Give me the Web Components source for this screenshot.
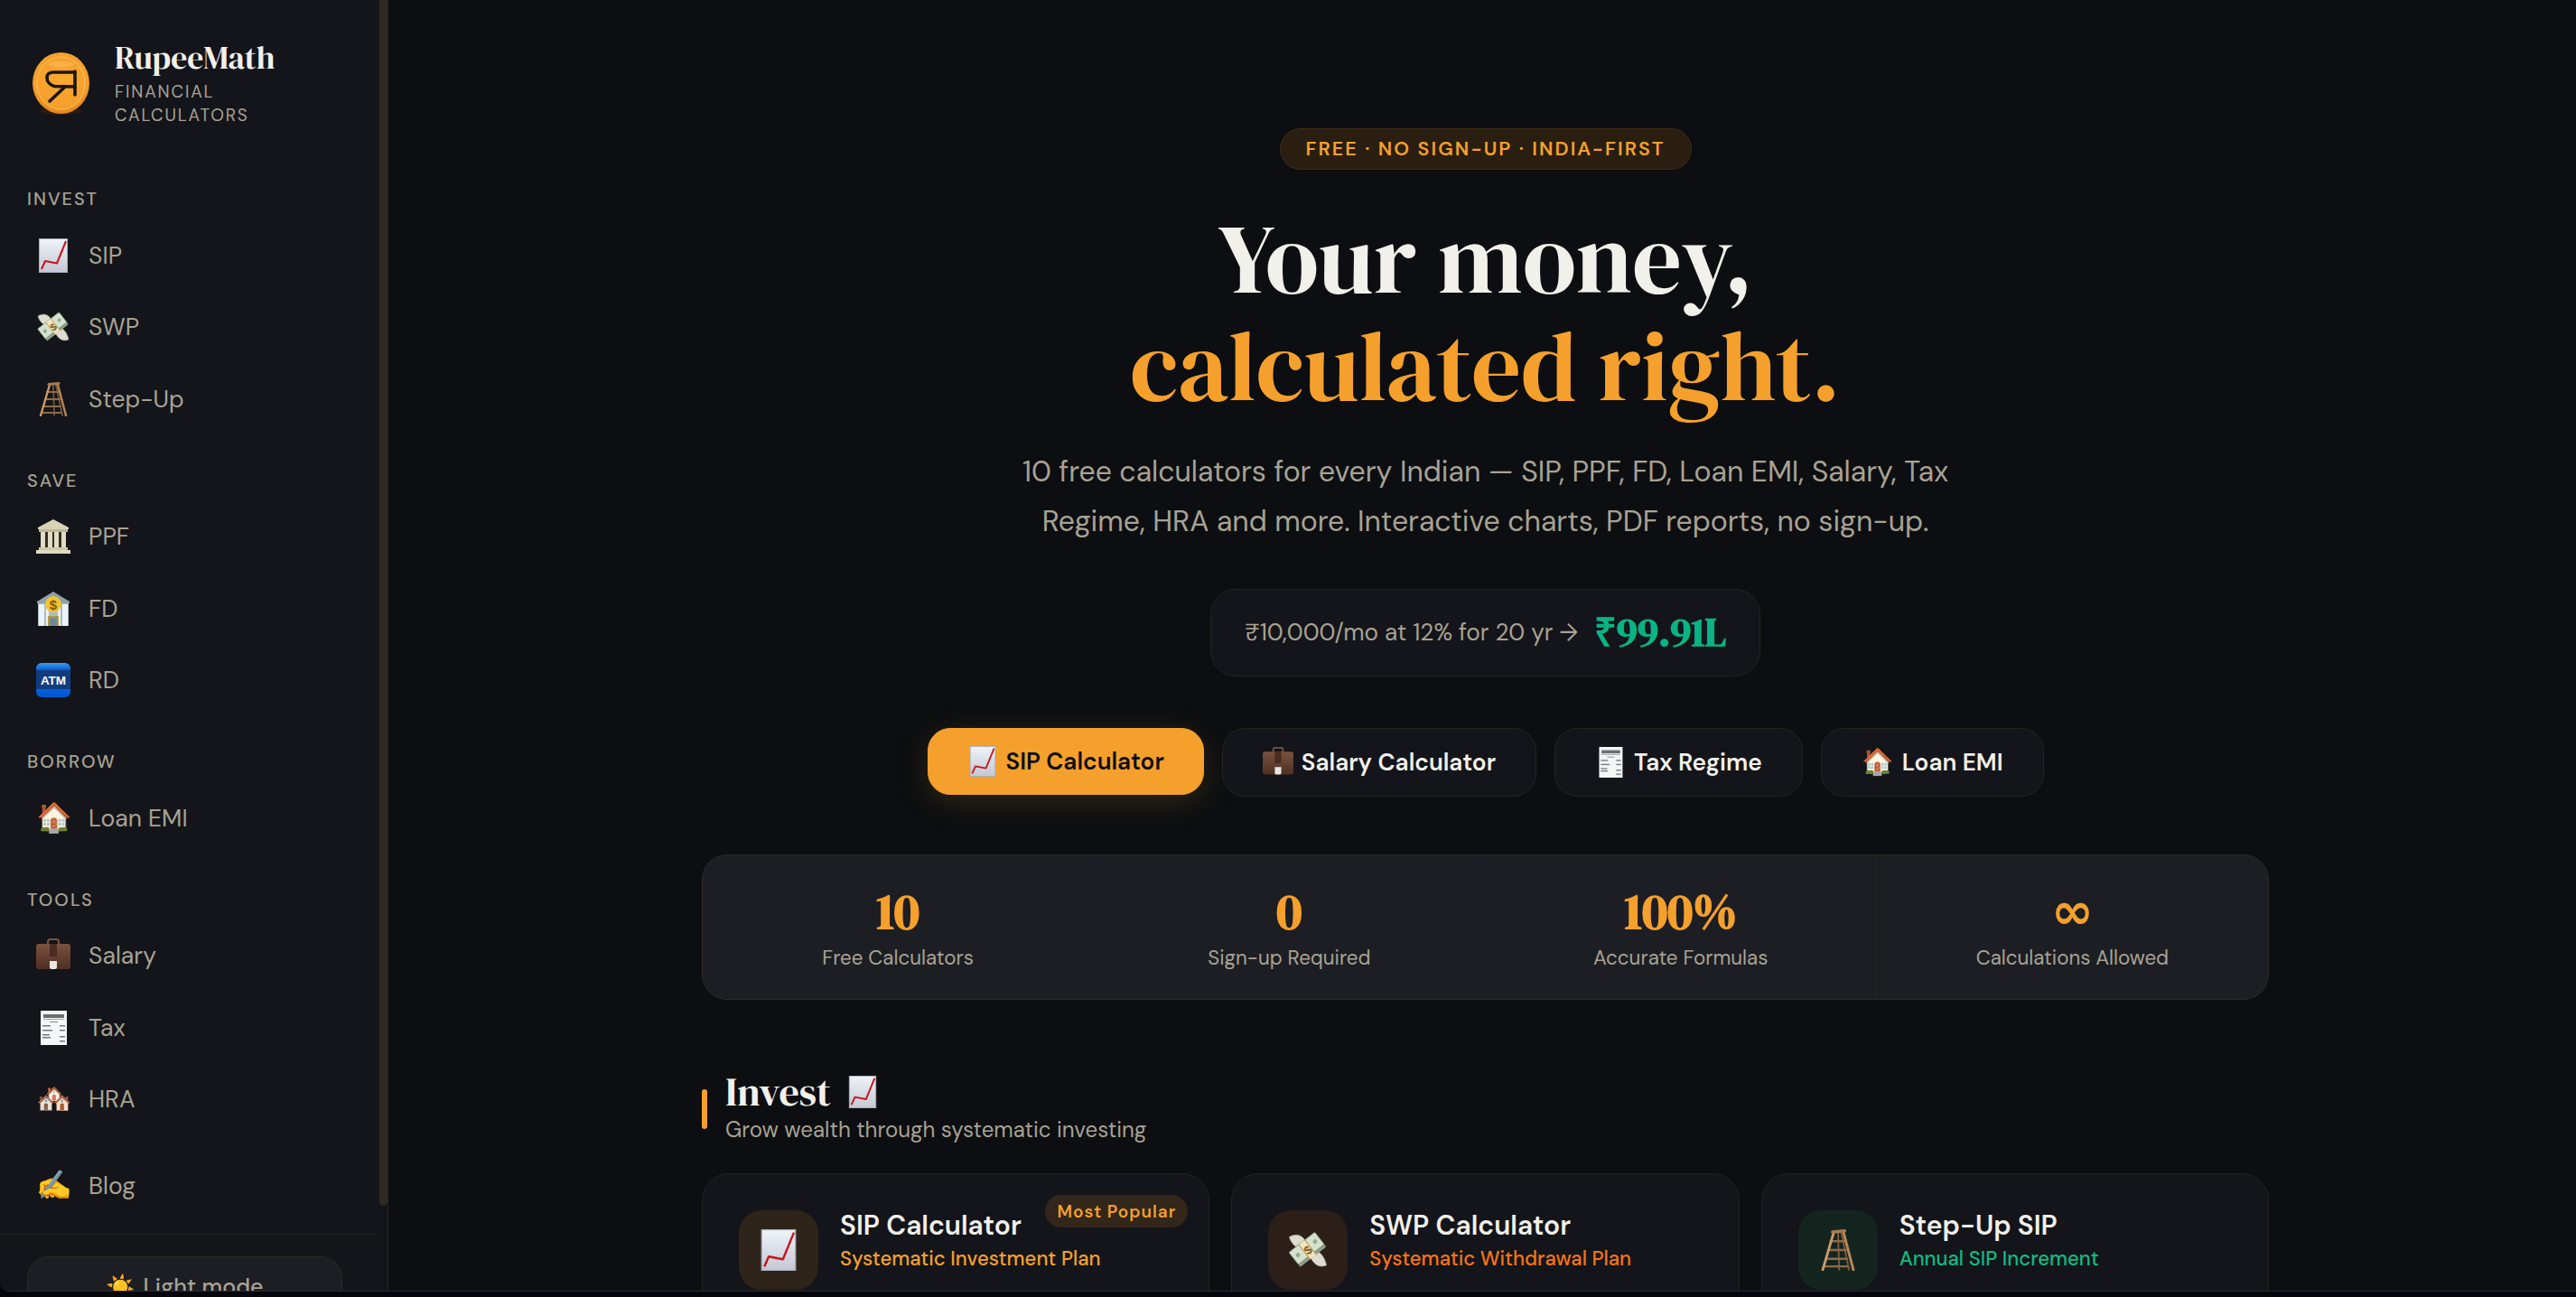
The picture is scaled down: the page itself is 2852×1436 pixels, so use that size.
<!doctype html>
<html lang="en"><head><meta charset="utf-8"><title>RupeeMath</title><style>
html,body{margin:0;height:100%;background:#05050d;overflow:hidden}
body{font-family:"DM Sans","Noto Sans",sans-serif;color:#a8a293}
</style></head><body>
<app-shell>
  <side-bar slot="side">
    <brand-mark slot="brand"></brand-mark>
    <nav-section label="Invest">
      <nav-item icon="chart">SIP</nav-item>
      <nav-item icon="money">SWP</nav-item>
      <nav-item icon="ladder">Step-Up</nav-item>
    </nav-section>
    <nav-section label="Save">
      <nav-item icon="temple">PPF</nav-item>
      <nav-item icon="bank">FD</nav-item>
      <nav-item icon="atm">RD</nav-item>
    </nav-section>
    <nav-section label="Borrow">
      <nav-item icon="🏠">Loan EMI</nav-item>
    </nav-section>
    <nav-section label="Tools">
      <nav-item icon="case">Salary</nav-item>
      <nav-item icon="receipt">Tax</nav-item>
      <nav-item icon="🏘️">HRA</nav-item>
    </nav-section>
    <nav-section class="blog">
      <nav-item icon="✍️">Blog</nav-item>
    </nav-section>
    <theme-toggle slot="foot">Light mode</theme-toggle>
  </side-bar>
  <main-view slot="main">
    <hero-block>
      <cta-button icon="chart" primary>SIP Calculator</cta-button>
      <cta-button icon="case">Salary Calculator</cta-button>
      <cta-button icon="receipt">Tax Regime</cta-button>
      <cta-button icon="🏠">Loan EMI</cta-button>
    </hero-block>
    <stat-strip>
      <stat-cell value="10">Free Calculators</stat-cell>
      <stat-cell value="0">Sign-up Required</stat-cell>
      <stat-cell value="100%">Accurate Formulas</stat-cell>
      <stat-cell value="∞">Calculations Allowed</stat-cell>
    </stat-strip>
    <section-head heading="Invest" icon="chart">Grow wealth through systematic investing</section-head>
    <card-grid>
      <calc-card icon="chart" tint="#2e2419" tone="#f5a02c" sub="Systematic Investment Plan" badge="Most Popular">SIP Calculator</calc-card>
      <calc-card icon="money" tint="#2c1f1a" tone="#f97316" sub="Systematic Withdrawal Plan">SWP Calculator</calc-card>
      <calc-card icon="ladder" tint="#14251f" tone="#10b981" sub="Annual SIP Increment">Step-Up SIP</calc-card>
    </card-grid>
  </main-view>
</app-shell>
<script>
const SANS = '"DM Sans","Noto Sans",sans-serif';
const SERIF = '"DM Serif Display","Liberation Serif",serif';

// drawn to look like the emoji in the screenshot, all on a 38x38 box
const ICONS = {
  chart: `<defs><linearGradient id="c" x1="0" y1="0" x2="0" y2="1"><stop offset="0" stop-color="#eff3f9"/><stop offset="1" stop-color="#c3c8d4"/></linearGradient></defs>
    <rect x="3.5" y=".5" width="31" height="37" fill="url(#c)" stroke="#aab0bd"/>
    <path d="M6 34l4-9 13 2.5L33 3" fill="none" stroke="#c8131b" stroke-width="2" stroke-linejoin="round"/>`,
  money: `<path d="M2 7c5-3 11-3 15 4l-5 7C8 17 3 12 2 7zM36 33c-5 2-10 1-14-6l5-7c4 1 8 7 9 13z" fill="#dedcd0" stroke="#9c9a8c" stroke-width=".6"/>
    <g transform="rotate(-38 19 19)"><rect x="4" y="11" width="30" height="16" rx="1" fill="#8f9f88"/><rect x="4" y="10" width="30" height="14" rx="1" fill="#d5e2cf" stroke="#7e8f78" stroke-width=".7"/><circle cx="9" cy="17" r="2" fill="#93ab8c"/><circle cx="29" cy="17" r="2" fill="#93ab8c"/><rect x="15" y="10" width="8" height="17" fill="#c9a24a"/><rect x="16" y="10" width="6" height="17" fill="#efe6c8"/></g>
    <text x="19" y="23" font-size="11" font-weight="700" text-anchor="middle" fill="#7a5a1a" font-family="Liberation Sans,sans-serif" transform="rotate(-38 19 19)">$</text>`,
  ladder: `<g fill="none" stroke-linecap="round"><path d="M19 3l1 34M22 3l7 34" stroke="#7a5a3e" stroke-width="1.6"/><path d="M12 11h13M10 19h16M8 27h19M6 34h22" stroke="#8d6a48" stroke-width="2"/><path d="M15 3L5 37" stroke="#c89a6a" stroke-width="2.4"/><path d="M24 3l9 34" stroke="#b98858" stroke-width="2.4"/><path d="M14 2.5l11-1" stroke="#a87a50" stroke-width="3"/></g>`,
  temple: `<path d="M19 0L36 9v2H2V9z" fill="#d9d3b6"/><rect x="3" y="11" width="32" height="3" fill="#bdb698"/><rect x="6" y="14" width="26" height="17" fill="#2f2e28"/><g fill="#e2dcc2"><rect x="5" y="14" width="5" height="17"/><rect x="13" y="14" width="5" height="17"/><rect x="20" y="14" width="5" height="17"/><rect x="28" y="14" width="5" height="17"/></g><rect x="3" y="31" width="32" height="3" fill="#cfc8aa"/><rect x="0" y="34" width="38" height="4" fill="#e0dac0"/>`,
  bank: `<path d="M19 0L37 11v2H1v-2z" fill="#8ea2ac"/><rect x="2" y="13" width="34" height="25" fill="#a9bbc4"/><g fill="#eef3f5"><rect x="3" y="14" width="6" height="24"/><rect x="29" y="14" width="6" height="24"/><rect x="11" y="14" width="3" height="24"/><rect x="24" y="14" width="3" height="24"/></g><rect x="13" y="27" width="12" height="11" fill="#b59a3e"/><rect x="15" y="29" width="8" height="9" fill="#6f8a94"/><circle cx="19" cy="14" r="9" fill="#f2c230"/><text x="19" y="19.5" font-size="15" font-weight="700" text-anchor="middle" fill="#7a5a10" font-family="Liberation Sans,sans-serif">$</text>`,
  atm: `<defs><linearGradient id="a" x1="0" y1="0" x2="0" y2="1"><stop offset="0" stop-color="#3b9cf0"/><stop offset=".2" stop-color="#0a5fd0"/><stop offset=".22" stop-color="#123c80"/><stop offset=".75" stop-color="#123c80"/><stop offset=".77" stop-color="#0060dd"/><stop offset="1" stop-color="#0058cc"/></linearGradient></defs><rect width="38" height="38" rx="6" fill="url(#a)"/><text x="19" y="24" font-size="13.5" font-weight="700" text-anchor="middle" fill="#fff" font-family="Liberation Sans,sans-serif">ATM</text>`,
  case: `<defs><linearGradient id="b" x1="0" y1="0" x2="0" y2="1"><stop offset="0" stop-color="#7a5240"/><stop offset="1" stop-color="#4e2f22"/></linearGradient></defs><path d="M13 8V3.5C13 2 14 1 15.5 1h7C24 1 25 2 25 3.5V8" fill="none" stroke="#7c5440" stroke-width="2"/><rect y="6" width="38" height="28" rx="3" fill="url(#b)"/><rect x="15" y="6" width="8" height="14" fill="#4a2c20"/><path d="M15 25h8v7c0 1-1 2-2 2h-4c-1 0-2-1-2-2z" fill="#e8e6e0"/>`,
  receipt: `<rect x="5" y="0" width="29" height="38" fill="#f4f5f6"/><rect x="8" y="4" width="23" height="4" fill="#6c6e72"/><rect x="8" y="9" width="23" height="1" fill="#a8aaae"/><rect x="15" y="12" width="9" height="1" fill="#8a8c90"/><g fill="#77797d"><rect x="7" y="16" width="9" height="1.5"/><rect x="26" y="16" width="6" height="1.5"/><rect x="7" y="21" width="11" height="1.5"/><rect x="26" y="21" width="6" height="1.5"/><rect x="7" y="26" width="8" height="1.5"/><rect x="7" y="29" width="9" height="1.5"/><rect x="26" y="28" width="6" height="1.5"/><rect x="26" y="33" width="6" height="1.5"/></g>`
};

// svg for the drawn ones, the font's colour glyph for the rest
function icon(name, size) {
  if (ICONS[name]) return `<svg width="${size}" height="${size}" viewBox="0 0 38 38" style="display:block;flex:none">${ICONS[name]}</svg>`;
  return `<span style="font-size:${size * 0.84}px;line-height:1;display:block">${name}</span>`;
}

class AppShell extends HTMLElement {
  constructor() {
    super();
    this.attachShadow({mode: 'open'}).innerHTML = `
    <style>
      :host { display: flex; height: 1430px; box-sizing: border-box; border-bottom: 1px solid #2c2c2c; border-bottom-left-radius: 10px; overflow: hidden; background: #0c0e11; }
    </style>
    <slot name="side"></slot><slot name="main"></slot>`;
  }
}

class SideBar extends HTMLElement {
  constructor() {
    super();
    this.attachShadow({mode: 'open'}).innerHTML = `
    <style>
      :host { display: flex; flex: none; width: 430px; height: 1429px; overflow: hidden; background: #13151a; border-right: 1px solid #26231f; box-sizing: border-box; }
      .col { width: 420px; flex: none; display: flex; flex-direction: column; }
      nav { height: 1367px; flex: none; overflow: hidden; box-sizing: border-box; border-bottom: 1px solid #26231f; }
      .thumb { width: 9px; height: 1335px; background: #2e2a22; border-radius: 0 0 5px 5px; }
    </style>
    <div class="col">
      <nav><slot name="brand"></slot><slot></slot></nav>
      <slot name="foot"></slot>
    </div>
    <div class="thumb"></div>`;
  }
}

class BrandMark extends HTMLElement {
  constructor() {
    super();
    this.attachShadow({mode: 'open'}).innerHTML = `
    <style>
      :host { display: flex; align-items: flex-start; gap: 28px; height: 208px; padding: 45px 0 0 36px; box-sizing: border-box; }
      svg { width: 63px; height: 72px; flex: none; margin-top: 13px; }
      b { display: block; font: 400 35.6px/38px ${SERIF}; color: #f2f0ea; }
      span { display: block; font: 400 19px/26px ${SANS}; letter-spacing: 1.8px; color: #a8a293; text-transform: uppercase; margin-top: 6px; width: 200px; }
    </style>
    <svg viewBox="0 0 63 72">
      <defs><radialGradient id="g" cx=".5" cy=".4" r=".6"><stop offset="0" stop-color="#f9a82f"/><stop offset=".8" stop-color="#f5a02c"/><stop offset="1" stop-color="#e2821c"/></radialGradient></defs>
      <ellipse cx="31.5" cy="65" rx="23" ry="4" fill="#2a1c0c"/>
      <ellipse cx="31.5" cy="34" rx="31.5" ry="34" fill="url(#g)"/>
      <ellipse cx="31.5" cy="34" rx="26.5" ry="29" fill="none" stroke="#fbc266" stroke-width="1"/>
      <ellipse cx="31.5" cy="13" rx="14" ry="3" fill="#fbbf63" opacity=".5"/>
      <path d="M47 22H23c-4 0-7 2-7 6s3 8 8 9.500L47 38M47 21v26" fill="none" stroke="#1d140a" stroke-width="3.6" stroke-linecap="round" stroke-linejoin="round"/>
      <path d="M35 39L19 54" fill="none" stroke="#1d140a" stroke-width="3.6" stroke-linecap="round"/>
    </svg>
    <div><b>RupeeMath</b><span>Financial Calculators</span></div>`;
  }
}

class NavSection extends HTMLElement {
  constructor() {
    super();
    const label = this.getAttribute('label');
    this.attachShadow({mode: 'open'}).innerHTML = `
    <style>
      :host { display: block; margin-bottom: 38px; }
      :host(.blog) { margin-top: -22px; margin-bottom: 0; }
      h3 { margin: 0 0 11px 30px; font: 500 20px/24px ${SANS}; letter-spacing: 2px; text-transform: uppercase; color: #a8a293; }
    </style>
    ${label ? `<h3>${label}</h3>` : ''}<slot></slot>`;
  }
}

class NavItem extends HTMLElement {
  constructor() {
    super();
    this.attachShadow({mode: 'open'}).innerHTML = `
    <style>
      :host { display: flex; align-items: center; height: 79.5px; padding-left: 40px; font: 400 26.6px/34px ${SANS}; color: #a8a293; }
      i { font-style: normal; width: 58px; flex: none; }
    </style>
    <i>${icon(this.getAttribute('icon'), 38)}</i><slot></slot>`;
  }
}

class ThemeToggle extends HTMLElement {
  constructor() {
    super();
    this.attachShadow({mode: 'open'}).innerHTML = `
    <style>
      :host { display: flex; justify-content: center; align-items: center; gap: 9px; box-sizing: border-box; width: 349px; height: 68px; margin: 24px 0 0 30px; flex: none; background: #1c1e24; border: 1px solid #2e2a22; border-radius: 24px; font: 500 25px/34px ${SANS}; color: #a8a293; }
      i { font-style: normal; font-size: 26px; line-height: 1; }
    </style>
    <i>☀️</i><slot></slot>`;
  }
}

class MainView extends HTMLElement {
  constructor() {
    super();
    this.attachShadow({mode: 'open'}).innerHTML = `
    <style>
      :host { display: block; flex: 1; min-width: 0; height: 1429px; overflow: hidden; padding: 142px 340px 0 347px; box-sizing: border-box; background: #0c0e11; }
    </style>
    <slot></slot>`;
  }
}

class HeroBlock extends HTMLElement {
  constructor() {
    super();
    this.attachShadow({mode: 'open'}).innerHTML = `
    <style>
      :host { display: flex; flex-direction: column; align-items: center; text-align: center; }
      .badge { box-sizing: border-box; height: 46px; width: 456px; padding-top: 2px; display: flex; align-items: center; justify-content: center; border: 1px solid #3f2f17; border-radius: 23px; background: #2a1e10; color: #f5a02c; font: 600 21.5px/1 ${SANS}; letter-spacing: 2.1px; }
      h1 { margin: 39px 0 30px; font: 400 108px/119px ${SERIF}; color: #f2f0ea; }
      h1 em { font-style: normal; color: #f5a02c; display: block; }
      p { margin: 0 0 48px; width: 1100px; font: 400 32px/54.5px ${SANS}; color: #a8a293; }
      .pill { box-sizing: border-box; height: 97px; width: 609px; display: flex; align-items: center; justify-content: center; gap: 18px; background: #13151a; border: 1px solid #26231f; border-radius: 28px; font: 400 26.2px/1 ${SANS}; color: #a8a293; }
      .pill b { font: 700 43.500px/1 ${SERIF}; color: #0ab383; }
      .cta { display: flex; gap: 20px; margin-top: 57px; align-items: flex-start; }
    </style>
    <div class="badge">FREE · NO SIGN-UP · INDIA-FIRST</div>
    <h1>Your money,<em>calculated right.</em></h1>
    <p>10 free calculators for every Indian — SIP, PPF, FD, Loan EMI, Salary, Tax<br>Regime, HRA and more. Interactive charts, PDF reports, no sign-up.</p>
    <div class="pill"><span>₹10,000/mo at 12% for 20 yr →</span><b>₹99.91L</b></div>
    <div class="cta"><slot></slot></div>`;
  }
}

class CtaButton extends HTMLElement {
  constructor() {
    super();
    this.attachShadow({mode: 'open'}).innerHTML = `
    <style>
      :host { display: flex; align-items: center; justify-content: center; gap: 9px; box-sizing: border-box; height: 76px; padding: 0 44px; background: #13151a; border: 1px solid #26231f; border-radius: 25px; font: 600 26.2px/1 ${SANS}; color: #f2f0ea; white-space: nowrap; }
      :host([primary]) { height: 74px; padding: 0 43px; background: #f5a02c; border-color: #f5a02c; color: #0c0e11; box-shadow: 0 8px 36px rgba(245,160,44,.16); }
    </style>
    ${icon(this.getAttribute('icon'), 34)}<slot></slot>`;
  }
}

class StatStrip extends HTMLElement {
  constructor() {
    super();
    this.attachShadow({mode: 'open'}).innerHTML = `
    <style>
      :host { display: grid; grid-template-columns: repeat(4, 1fr); height: 161px; box-sizing: border-box; margin-top: 64px; background: #1c1e24; border: 1px solid #2e2a22; border-radius: 28px; overflow: hidden; }
    </style>
    <slot></slot>`;
  }
}

class StatCell extends HTMLElement {
  constructor() {
    super();
    const value = this.getAttribute('value');
    this.attachShadow({mode: 'open'}).innerHTML = `
    <style>
      :host { display: flex; flex-direction: column; align-items: center; border-right: 1px solid #26231f; }
      :host(:last-child) { border-right: 0; }
      b { font: 700 56px/56px ${value === '∞' ? '"DejaVu Sans",sans-serif' : SERIF}; color: #f5a02c; margin-top: 34px; height: 56px; }
      span { font: 400 22.3px/30px ${SANS}; color: #a8a293; margin-top: 9px; }
    </style>
    <b>${value}</b><span><slot></slot></span>`;
  }
}

class SectionHead extends HTMLElement {
  constructor() {
    super();
    this.attachShadow({mode: 'open'}).innerHTML = `
    <style>
      :host { display: flex; gap: 20px; margin-top: 76px; height: 116px; align-items: flex-start; }
      .bar { width: 6px; height: 44px; margin-top: 23px; background: #f5a02c; border-radius: 3px; flex: none; }
      h2 { margin: 0; display: flex; align-items: center; gap: 17px; font: 400 44px/52px ${SERIF}; color: #f2f0ea; }
      p { margin: 0; font: 400 24.1px/32px ${SANS}; color: #a8a293; }
    </style>
    <div class="bar"></div>
    <div><h2>${this.getAttribute('heading')} ${icon(this.getAttribute('icon'), 36)}</h2><p><slot></slot></p></div>`;
  }
}

class CardGrid extends HTMLElement {
  constructor() {
    super();
    this.attachShadow({mode: 'open'}).innerHTML = `
    <style>
      :host { display: grid; grid-template-columns: repeat(3, 1fr); gap: 24px; }
    </style>
    <slot></slot>`;
  }
}

class CalcCard extends HTMLElement {
  constructor() {
    super();
    const badge = this.getAttribute('badge');
    this.attachShadow({mode: 'open'}).innerHTML = `
    <style>
      :host { display: flex; position: relative; gap: 24px; height: 300px; box-sizing: border-box; padding: 40px; background: #13151a; border: 1px solid #26231f; border-radius: 30px; align-items: flex-start; }
      .ico { width: 88px; height: 88px; flex: none; border-radius: 25px; display: flex; align-items: center; justify-content: center; background: ${this.getAttribute('tint')}; }
      b { display: block; font: 600 30px/38px ${SANS}; color: #f2f0ea; margin-top: -2px; }
      span { display: block; font: 500 22.1px/30px ${SANS}; color: ${this.getAttribute('tone')}; margin-top: 3px; }
      .tag { position: absolute; top: 23px; right: 23px; height: 36px; padding: 0 13px; box-sizing: border-box; display: flex; align-items: center; border-radius: 18px; background: #33261a; color: #f5a02c; font: 600 19px/1 ${SANS}; letter-spacing: 1px; }
    </style>
    <div class="ico">${icon(this.getAttribute('icon'), 46)}</div>
    <div><b><slot></slot></b><span>${this.getAttribute('sub')}</span></div>
    ${badge ? `<div class="tag">${badge}</div>` : ''}`;
  }
}

customElements.define('app-shell', AppShell);
customElements.define('side-bar', SideBar);
customElements.define('brand-mark', BrandMark);
customElements.define('nav-section', NavSection);
customElements.define('nav-item', NavItem);
customElements.define('theme-toggle', ThemeToggle);
customElements.define('main-view', MainView);
customElements.define('hero-block', HeroBlock);
customElements.define('cta-button', CtaButton);
customElements.define('stat-strip', StatStrip);
customElements.define('stat-cell', StatCell);
customElements.define('section-head', SectionHead);
customElements.define('card-grid', CardGrid);
customElements.define('calc-card', CalcCard);
</script></body></html>
